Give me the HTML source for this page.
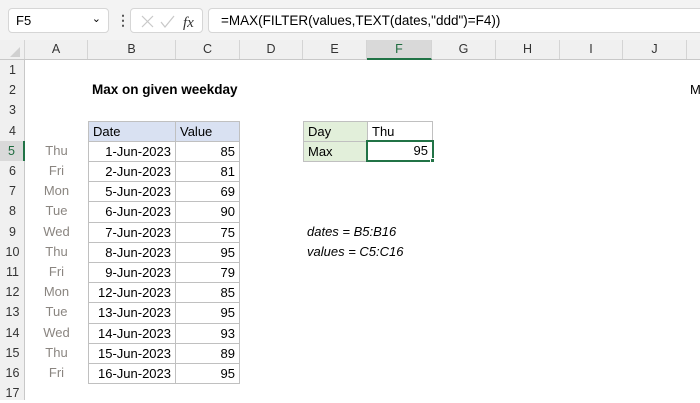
<!DOCTYPE html>
<html><head><style>
*{box-sizing:border-box;margin:0;padding:0}
body{width:700px;height:400px;overflow:hidden;background:#fff;font-family:"Liberation Sans",sans-serif;font-size:13px;color:#000;position:relative}
.top{position:absolute;left:0;top:0;width:700px;height:40px;background:#f3f3f3}
.nb{position:absolute;left:8px;top:8px;width:101px;height:25px;background:#fff;border:1px solid #d6d6d6;border-radius:4px;padding:4px 7px;font-size:13px}
.fx{position:absolute;left:130px;top:8px;width:73px;height:25px;background:#fff;border:1px solid #d6d6d6;border-radius:4px}
.fb{position:absolute;left:208px;top:8px;width:500px;height:25px;background:#fff;border:1px solid #d6d6d6;border-radius:4px;padding:4px 12px;font-size:13.5px}
.ch{position:absolute;top:40px;height:20px;background:#f0f0f0;border-bottom:1px solid #c8c8c8;width:700px}
.ch div{position:absolute;top:0;height:19px;border-right:1px solid #d4d4d4;text-align:center;line-height:19px;color:#333;font-size:12.5px}
.rh{position:absolute;left:0;width:25px;background:#f0f0f0;border-right:1px solid #c8c8c8}
.c{position:absolute;height:21.2px;line-height:19px;padding:0 4px;white-space:nowrap}
.b{border:1px solid #c0c0c0}
.r{text-align:right}
.g{color:#8a8580;text-align:center;width:63px;left:25px}
.rn{position:absolute;left:0;width:25px;height:20.2px;line-height:20.2px;text-align:center;color:#333;font-size:12.5px}
</style></head><body>
<div class="top"></div>
<div class="nb">F5<span style="position:absolute;right:7px;top:3px;font-size:11px">&#8964;</span></div>
<div style="position:absolute;left:116px;top:12px;color:#555;font-size:14px;font-weight:bold">&#8942;</div>
<div class="fx">
<svg width="73" height="25" style="position:absolute;left:0;top:0"><path d="M11 7l11 11M22 7L11 18" stroke="#c8c8c8" stroke-width="1.2" fill="none"/><path d="M30 13l4 5 9-11" stroke="#c8c8c8" stroke-width="1.2" fill="none"/><text x="52" y="18" font-family="Liberation Serif" font-style="italic" font-size="15" fill="#333">fx</text></svg>
</div>
<div class="fb">=MAX(FILTER(values,TEXT(dates,"ddd")=F4))</div>
<div class="ch">
<div style="left:0;width:25px"><svg width="25" height="19"><path d="M20 7v10H10z" fill="#d0d0d0"/></svg></div>
<div style="left:25px;width:63px">A</div>
<div style="left:88px;width:88px">B</div>
<div style="left:176px;width:64px">C</div>
<div style="left:240px;width:63px">D</div>
<div style="left:303px;width:64px">E</div>
<div style="left:367px;width:65px;background:#d9d9d9;border-bottom:2px solid #217346;height:20px;color:#1e6b3e">F</div>
<div style="left:432px;width:64px">G</div>
<div style="left:496px;width:64px">H</div>
<div style="left:560px;width:63px">I</div>
<div style="left:623px;width:64px">J</div>
<div style="left:687px;width:20px"></div>
</div>
<div class="rh" style="top:60px;height:340px"></div>
<div class="rn" style="top:60px">1</div>
<div class="rn" style="top:80.2px">2</div>
<div class="rn" style="top:100.4px">3</div>
<div class="rn" style="top:120.6px">4</div>
<div class="rn" style="top:140.8px;background:#d9d9d9;color:#1e6b3e;border-right:2px solid #217346">5</div>
<div class="rn" style="top:161px">6</div>
<div class="rn" style="top:181.2px">7</div>
<div class="rn" style="top:201.4px">8</div>
<div class="rn" style="top:221.6px">9</div>
<div class="rn" style="top:241.8px">10</div>
<div class="rn" style="top:262px">11</div>
<div class="rn" style="top:282.2px">12</div>
<div class="rn" style="top:302.4px">13</div>
<div class="rn" style="top:322.6px">14</div>
<div class="rn" style="top:342.8px">15</div>
<div class="rn" style="top:363px">16</div>
<div class="rn" style="top:383.2px">17</div>

<div class="c" style="left:88px;top:80.2px;font-weight:bold;font-size:13.5px">Max on given weekday</div>
<div class="c" style="left:686px;top:80.2px">M</div>

<div class="c b" style="left:88px;top:120.6px;width:88px;background:#d9e1f2">Date</div>
<div class="c b" style="left:175px;top:120.6px;width:65px;background:#d9e1f2">Value</div>

<div class="c b" style="left:303px;top:120.6px;width:65px;background:#e2efda">Day</div>
<div class="c b" style="left:367px;top:120.6px;width:66px">Thu</div>
<div class="c b" style="left:303px;top:140.8px;width:65px;background:#e2efda">Max</div>
<div class="c r" style="left:366px;top:139.8px;width:68px;height:22px;border:2px solid #217346;line-height:18px">95</div>
<div style="position:absolute;left:430px;top:158px;width:5px;height:5px;background:#217346;border:1px solid #fff"></div>

<div class="c" style="left:303px;top:221.6px;font-style:italic">dates = B5:B16</div>
<div class="c" style="left:303px;top:241.8px;font-style:italic">values = C5:C16</div>

<div class="c g" style="top:140.8px">Thu</div><div class="c b r" style="left:88px;top:140.8px;width:88px">1-Jun-2023</div><div class="c b r" style="left:175px;top:140.8px;width:65px">85</div>
<div class="c g" style="top:161px">Fri</div><div class="c b r" style="left:88px;top:161px;width:88px">2-Jun-2023</div><div class="c b r" style="left:175px;top:161px;width:65px">81</div>
<div class="c g" style="top:181.2px">Mon</div><div class="c b r" style="left:88px;top:181.2px;width:88px">5-Jun-2023</div><div class="c b r" style="left:175px;top:181.2px;width:65px">69</div>
<div class="c g" style="top:201.4px">Tue</div><div class="c b r" style="left:88px;top:201.4px;width:88px">6-Jun-2023</div><div class="c b r" style="left:175px;top:201.4px;width:65px">90</div>
<div class="c g" style="top:221.6px">Wed</div><div class="c b r" style="left:88px;top:221.6px;width:88px">7-Jun-2023</div><div class="c b r" style="left:175px;top:221.6px;width:65px">75</div>
<div class="c g" style="top:241.8px">Thu</div><div class="c b r" style="left:88px;top:241.8px;width:88px">8-Jun-2023</div><div class="c b r" style="left:175px;top:241.8px;width:65px">95</div>
<div class="c g" style="top:262px">Fri</div><div class="c b r" style="left:88px;top:262px;width:88px">9-Jun-2023</div><div class="c b r" style="left:175px;top:262px;width:65px">79</div>
<div class="c g" style="top:282.2px">Mon</div><div class="c b r" style="left:88px;top:282.2px;width:88px">12-Jun-2023</div><div class="c b r" style="left:175px;top:282.2px;width:65px">85</div>
<div class="c g" style="top:302.4px">Tue</div><div class="c b r" style="left:88px;top:302.4px;width:88px">13-Jun-2023</div><div class="c b r" style="left:175px;top:302.4px;width:65px">95</div>
<div class="c g" style="top:322.6px">Wed</div><div class="c b r" style="left:88px;top:322.6px;width:88px">14-Jun-2023</div><div class="c b r" style="left:175px;top:322.6px;width:65px">93</div>
<div class="c g" style="top:342.8px">Thu</div><div class="c b r" style="left:88px;top:342.8px;width:88px">15-Jun-2023</div><div class="c b r" style="left:175px;top:342.8px;width:65px">89</div>
<div class="c g" style="top:363px">Fri</div><div class="c b r" style="left:88px;top:363px;width:88px">16-Jun-2023</div><div class="c b r" style="left:175px;top:363px;width:65px">95</div>
</body></html>
